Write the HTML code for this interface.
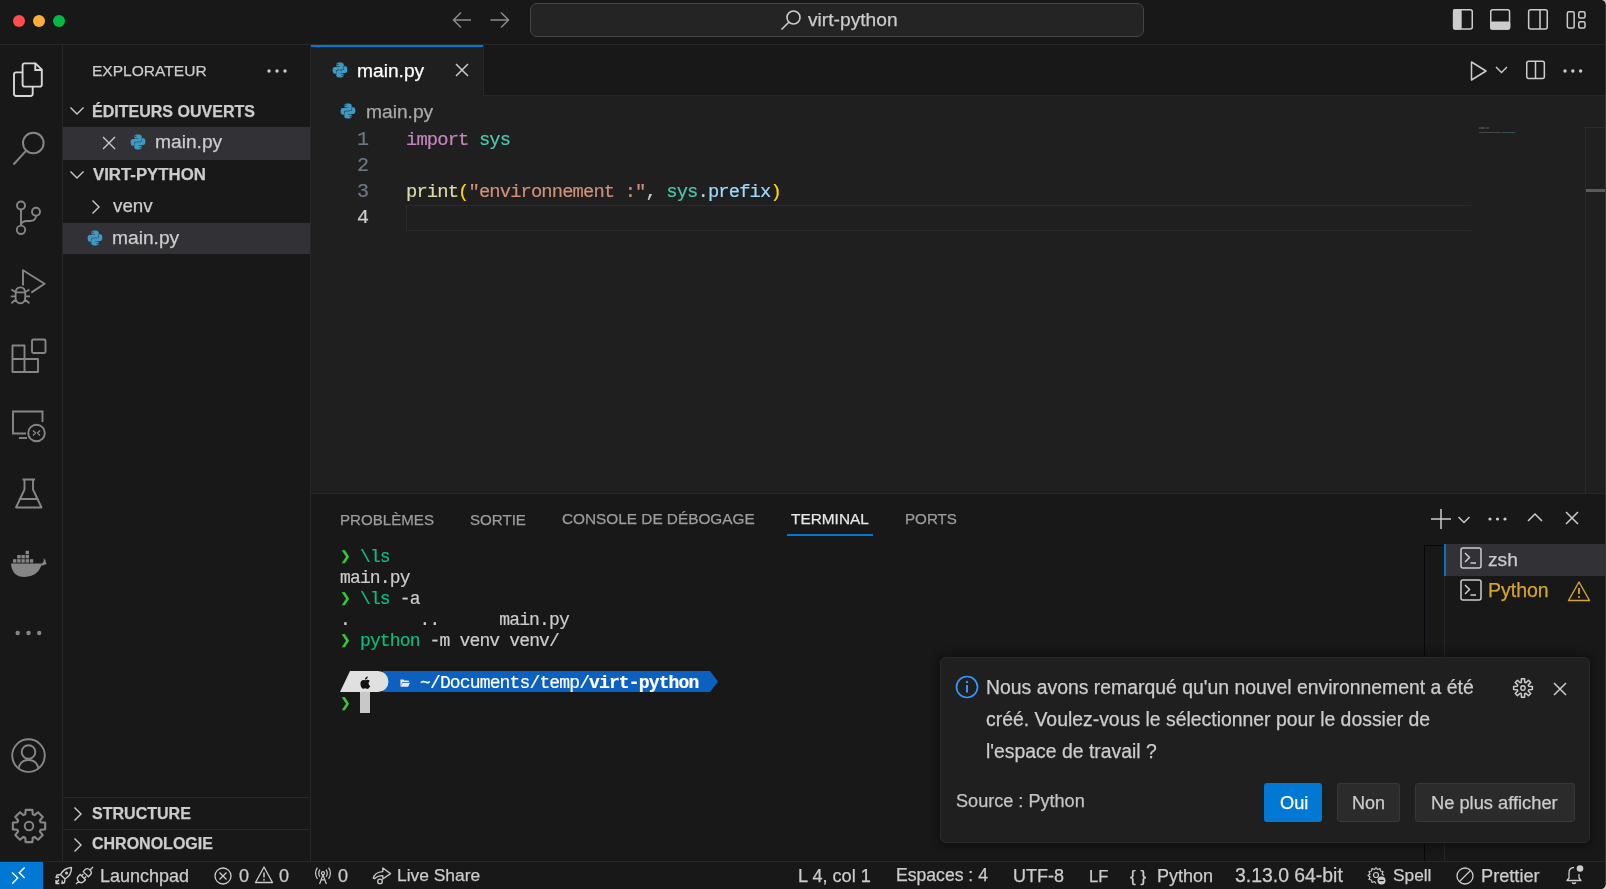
<!DOCTYPE html>
<html><head><meta charset="utf-8">
<style>
html,body{margin:0;padding:0;}
body{width:1606px;height:889px;position:relative;overflow:hidden;background:#181818;}
.r{position:absolute;box-sizing:border-box;}
svg.r{overflow:visible;}
.t{position:absolute;line-height:1;white-space:pre;will-change:transform;}
.s{font-family:"Liberation Sans",sans-serif;-webkit-text-stroke:0.25px currentColor;}
.m{font-family:"Liberation Mono",monospace;-webkit-text-stroke:0.2px currentColor;}
</style></head><body>
<div class="r" style="left:0px;top:44px;width:1606px;height:1px;background:#272727;"></div>
<div class="r" style="left:12.7px;top:14.7px;width:12.6px;height:12.6px;border-radius:50%;background:#fe4e4b"></div>
<div class="r" style="left:32.7px;top:14.7px;width:12.6px;height:12.6px;border-radius:50%;background:#fdae3a"></div>
<div class="r" style="left:52.7px;top:14.7px;width:12.6px;height:12.6px;border-radius:50%;background:#03b944"></div>
<svg class="r" style="left:452px;top:11px" width="20" height="18" viewBox="0 0 20 18"><path d="M1.5 9 H19 M9 1.5 L1.5 9 L9 16.5" fill="none" stroke="#8b8b8b" stroke-width="1.5"/></svg>
<svg class="r" style="left:490px;top:11px" width="20" height="18" viewBox="0 0 20 18"><path d="M0.5 9 H18 M11 1.5 L18.5 9 L11 16.5" fill="none" stroke="#8b8b8b" stroke-width="1.5"/></svg>
<div class="r" style="left:530px;top:3px;width:614px;height:34px;border:1px solid #464646;border-radius:7px;background:#242424"></div>
<svg class="r" style="left:780px;top:9px" width="22" height="22" viewBox="0 0 22 22"><circle cx="13.5" cy="8.5" r="6.5" fill="none" stroke="#cccccc" stroke-width="1.6"/><path d="M9 13 L1.5 20.5" stroke="#cccccc" stroke-width="1.6"/></svg>
<div class="t s" style="left:808.00px;top:9.75px;font-size:19.2px;color:#cccccc;">virt-python</div>
<svg class="r" style="left:1452px;top:9px" width="22" height="22" viewBox="0 0 22 22"><rect x="1.65" y="0.85" width="18.6" height="19.2" rx="2" fill="none" stroke="#cccccc" stroke-width="1.5"/><rect x="0.9" y="0.1" width="8.8" height="20.7" rx="2" fill="#cccccc"/></svg>
<svg class="r" style="left:1489px;top:9px" width="22" height="22" viewBox="0 0 22 22"><rect x="1.75" y="0.85" width="18.8" height="19.2" rx="2" fill="none" stroke="#cccccc" stroke-width="1.5"/><rect x="1" y="12.6" width="20.3" height="8.2" rx="2" fill="#cccccc"/></svg>
<svg class="r" style="left:1527px;top:9px" width="22" height="22" viewBox="0 0 22 22"><rect x="1.65" y="0.85" width="18.6" height="19.2" rx="2" fill="none" stroke="#cccccc" stroke-width="1.5"/><path d="M13 1 V20" stroke="#cccccc" stroke-width="1.5"/></svg>
<svg class="r" style="left:1565px;top:9px" width="22" height="22" viewBox="0 0 22 22"><rect x="2.35" y="2.65" width="6.8" height="16.25" rx="1.5" fill="none" stroke="#cccccc" stroke-width="1.5"/><rect x="13.75" y="2.75" width="6.25" height="6.25" rx="1.5" fill="none" stroke="#cccccc" stroke-width="1.5"/><rect x="13.75" y="12.75" width="6.25" height="6.25" rx="1.5" fill="none" stroke="#cccccc" stroke-width="1.5"/></svg>
<div class="r" style="left:62px;top:45px;width:1px;height:816px;background:#272727;"></div>
<svg class="r" style="left:12px;top:61px" width="32" height="38" viewBox="0 0 32 38"><path d="M10.6 11.4 H4.2 Q2 11.4 2 13.6 V32.8 Q2 35 4.2 35 H18.5 Q20.7 35 20.7 32.8 V25.6" fill="none" stroke="#d7d7d7" stroke-width="1.9"/><path d="M12.8 2.4 H23.5 L29.8 8.7 V23.4 Q29.8 25.6 27.6 25.6 H12.8 Q10.6 25.6 10.6 23.4 V4.6 Q10.6 2.4 12.8 2.4 Z M23.3 2.8 V9 H29.6" fill="none" stroke="#d7d7d7" stroke-width="1.9"/></svg>
<svg class="r" style="left:10px;top:128px" width="36" height="40" viewBox="0 0 36 40"><circle cx="23.3" cy="15" r="10.3" fill="none" stroke="#868686" stroke-width="2"/><path d="M16 22.8 L3.5 36.5" stroke="#868686" stroke-width="2"/></svg>
<svg class="r" style="left:10px;top:196px" width="36" height="40" viewBox="0 0 36 40"><circle cx="11" cy="9.5" r="4" fill="none" stroke="#868686" stroke-width="1.9"/><circle cx="11" cy="33.8" r="4.2" fill="none" stroke="#868686" stroke-width="1.9"/><circle cx="26" cy="15.8" r="4" fill="none" stroke="#868686" stroke-width="1.9"/><path d="M11 13.5 V29.6 M26 19.8 Q26 25 20 25 H17 Q11 25 11 29.6" fill="none" stroke="#868686" stroke-width="1.9"/></svg>
<svg class="r" style="left:8px;top:266px" width="40" height="40" viewBox="0 0 40 40"><path d="M15 19.6 V4.2 L36.6 17.8 L23.3 26.6" fill="none" stroke="#868686" stroke-width="1.9" stroke-linejoin="round"/><path d="M7.6 27.2 Q7.6 21.3 12.4 21.3 Q17.2 21.3 17.2 27.2 V31.6 Q17.2 37.3 12.4 37.3 Q7.6 37.3 7.6 31.6 Z M7.6 26.4 H17.2 M3.4 23.5 L7.4 26.1 M2.8 30.4 H7.6 M3.4 37.2 L7.3 34 M21.4 23.5 L17.4 26.1 M17.2 30.4 H22 M21.4 37.2 L17.5 34" fill="none" stroke="#868686" stroke-width="1.8"/></svg>
<svg class="r" style="left:9px;top:336px" width="40" height="40" viewBox="0 0 40 40"><path d="M3.5 9.5 H15.5 V23 H29 V36 H3.5 Z M3.5 23 H15.5 V36" fill="none" stroke="#868686" stroke-width="1.9" stroke-linejoin="round"/><rect x="23" y="3.5" width="13.5" height="13.5" rx="1.5" fill="none" stroke="#868686" stroke-width="1.9"/></svg>
<svg class="r" style="left:9px;top:406px" width="40" height="40" viewBox="0 0 40 40"><path d="M17 27.5 H4 V5.5 H33.5 V16" fill="none" stroke="#868686" stroke-width="1.9"/><path d="M10 32 H18" stroke="#868686" stroke-width="1.9"/><circle cx="27.5" cy="27" r="8.3" fill="none" stroke="#868686" stroke-width="1.9"/><path d="M24 24.5 L26.5 27 L24 29.5 M31 24.5 L28.5 27 L31 29.5" fill="none" stroke="#868686" stroke-width="1.4"/></svg>
<svg class="r" style="left:9px;top:475px" width="40" height="40" viewBox="0 0 40 40"><path d="M13.5 4.5 H26 M15.5 4.5 V14.5 L7 32.5 H32.5 L24 14.5 V4.5 M9.8 24 H29.5" fill="none" stroke="#868686" stroke-width="1.9" stroke-linejoin="round"/></svg>
<svg class="r" style="left:9px;top:548px" width="40" height="32" viewBox="0 0 40 32"><path d="M2 15.5 H33 Q35.5 13 34.5 10 Q37.5 12.5 36.5 14 Q38 15 37.5 16 Q34 17.5 32.5 17.5 Q28 29 15.5 29 Q3 29 2 15.5 Z" fill="#868686"/><g fill="#868686"><rect x="4" y="11.2" width="3.4" height="3.4"/><rect x="8.2" y="11.2" width="3.4" height="3.4"/><rect x="12.4" y="11.2" width="3.4" height="3.4"/><rect x="16.6" y="11.2" width="3.4" height="3.4"/><rect x="20.8" y="11.2" width="3.4" height="3.4"/><rect x="8.2" y="7" width="3.4" height="3.4"/><rect x="12.4" y="7" width="3.4" height="3.4"/><rect x="16.6" y="7" width="3.4" height="3.4"/><rect x="16.6" y="2.8" width="3.4" height="3.4"/></g></svg>
<svg class="r" style="left:12px;top:628px" width="32" height="10" viewBox="0 0 32 10"><circle cx="5.7" cy="5" r="2.2" fill="#868686"/><circle cx="16.5" cy="5" r="2.2" fill="#868686"/><circle cx="27.2" cy="5" r="2.2" fill="#868686"/></svg>
<svg class="r" style="left:9px;top:736px" width="40" height="40" viewBox="0 0 40 40"><circle cx="19.5" cy="19.6" r="16.3" fill="none" stroke="#868686" stroke-width="1.9"/><circle cx="19.5" cy="16" r="6.8" fill="none" stroke="#868686" stroke-width="1.9"/><path d="M9.5 32.5 Q11.5 24 19.5 24 Q27.5 24 29.5 32.5" fill="none" stroke="#868686" stroke-width="1.9"/></svg>
<svg class="r" style="left:8.7px;top:806px" width="40" height="40" viewBox="0 0 40 40"><path d="M31.60 16.23 L36.16 16.65 L36.16 23.35 L31.60 23.77 L30.87 25.54 L33.79 29.06 L29.06 33.79 L25.54 30.87 L23.77 31.60 L23.35 36.16 L16.65 36.16 L16.23 31.60 L14.46 30.87 L10.94 33.79 L6.21 29.06 L9.13 25.54 L8.40 23.77 L3.84 23.35 L3.84 16.65 L8.40 16.23 L9.13 14.46 L6.21 10.94 L10.94 6.21 L14.46 9.13 L16.23 8.40 L16.65 3.84 L23.35 3.84 L23.77 8.40 L25.54 9.13 L29.06 6.21 L33.79 10.94 L30.87 14.46 Z" fill="none" stroke="#868686" stroke-width="2.1" stroke-linejoin="round"/><circle cx="20" cy="20" r="4.3" fill="none" stroke="#868686" stroke-width="1.9"/></svg>
<div class="r" style="left:310px;top:45px;width:1px;height:816px;background:#272727;"></div>
<div class="t s" style="left:92.20px;top:62.84px;font-size:15.55px;color:#cccccc;">EXPLORATEUR</div>
<svg class="r" style="left:266px;top:66px" width="22" height="10" viewBox="0 0 22 10"><circle cx="3" cy="5" r="1.7" fill="#cccccc"/><circle cx="11" cy="5" r="1.7" fill="#cccccc"/><circle cx="19" cy="5" r="1.7" fill="#cccccc"/></svg>
<svg class="r" style="left:69px;top:106px" width="16" height="10" viewBox="0 0 16 10"><path d="M1.5 1.5 L8 8 L14.5 1.5" fill="none" stroke="#cccccc" stroke-width="1.4"/></svg>
<div class="t s" style="left:92.40px;top:103.21px;font-size:16.05px;color:#cccccc;font-weight:bold;">ÉDITEURS OUVERTS</div>
<div class="r" style="left:63px;top:127px;width:247px;height:33px;background:#313136;"></div>
<svg class="r" style="left:101px;top:135px" width="16" height="16" viewBox="0 0 16 16"><path d="M2 2 L14 14 M14 2 L2 14" stroke="#cccccc" stroke-width="1.4"/></svg>
<svg class="r" style="left:130px;top:134px" width="16" height="16" viewBox="0 0 16 16"><g fill="#3d9bc3"><path d="M7.6 0.6 C4.2 0.6 4.5 2.1 4.5 2.1 V4.4 H7.8 V5.1 H3 C3 5.1 0.6 4.8 0.6 8.3 C0.6 11.8 2.7 11.7 2.7 11.7 H4 V9.9 C4 9.9 3.9 7.8 6.1 7.8 H9.7 C9.7 7.8 11.7 7.8 11.7 5.8 V2.6 C11.7 2.6 12 0.6 7.6 0.6 Z M5.8 1.6 A0.65 0.65 0 1 1 5.8 2.9 A0.65 0.65 0 1 1 5.8 1.6 Z"/><path d="M8.4 15.4 C11.8 15.4 11.5 13.9 11.5 13.9 V11.6 H8.2 V10.9 H13 C13 10.9 15.4 11.2 15.4 7.7 C15.4 4.2 13.3 4.3 13.3 4.3 H12 V6.1 C12 6.1 12.1 8.2 9.9 8.2 H6.3 C6.3 8.2 4.3 8.2 4.3 10.2 V13.4 C4.3 13.4 4 15.4 8.4 15.4 Z M10.2 14.4 A0.65 0.65 0 1 1 10.2 13.1 A0.65 0.65 0 1 1 10.2 14.4 Z"/></g></svg>
<div class="t s" style="left:155.40px;top:132.05px;font-size:19.2px;color:#cccccc;">main.py</div>
<svg class="r" style="left:69px;top:170px" width="16" height="10" viewBox="0 0 16 10"><path d="M1.5 1.5 L8 8 L14.5 1.5" fill="none" stroke="#cccccc" stroke-width="1.4"/></svg>
<div class="t s" style="left:92.90px;top:166.98px;font-size:16.8px;color:#cccccc;font-weight:bold;">VIRT-PYTHON</div>
<svg class="r" style="left:91px;top:199px" width="10" height="16" viewBox="0 0 10 16"><path d="M1.5 1.5 L8 8 L1.5 14.5" fill="none" stroke="#cccccc" stroke-width="1.4"/></svg>
<div class="t s" style="left:112.60px;top:196.79px;font-size:18.8px;color:#cccccc;">venv</div>
<div class="r" style="left:63px;top:223px;width:247px;height:31px;background:#313136;"></div>
<svg class="r" style="left:86.5px;top:230px" width="16" height="16" viewBox="0 0 16 16"><g fill="#3d9bc3"><path d="M7.6 0.6 C4.2 0.6 4.5 2.1 4.5 2.1 V4.4 H7.8 V5.1 H3 C3 5.1 0.6 4.8 0.6 8.3 C0.6 11.8 2.7 11.7 2.7 11.7 H4 V9.9 C4 9.9 3.9 7.8 6.1 7.8 H9.7 C9.7 7.8 11.7 7.8 11.7 5.8 V2.6 C11.7 2.6 12 0.6 7.6 0.6 Z M5.8 1.6 A0.65 0.65 0 1 1 5.8 2.9 A0.65 0.65 0 1 1 5.8 1.6 Z"/><path d="M8.4 15.4 C11.8 15.4 11.5 13.9 11.5 13.9 V11.6 H8.2 V10.9 H13 C13 10.9 15.4 11.2 15.4 7.7 C15.4 4.2 13.3 4.3 13.3 4.3 H12 V6.1 C12 6.1 12.1 8.2 9.9 8.2 H6.3 C6.3 8.2 4.3 8.2 4.3 10.2 V13.4 C4.3 13.4 4 15.4 8.4 15.4 Z M10.2 14.4 A0.65 0.65 0 1 1 10.2 13.1 A0.65 0.65 0 1 1 10.2 14.4 Z"/></g></svg>
<div class="t s" style="left:112.30px;top:227.95px;font-size:19.2px;color:#cccccc;">main.py</div>
<div class="r" style="left:63px;top:797px;width:246px;height:1px;background:#272727;"></div>
<svg class="r" style="left:73px;top:806px" width="10" height="16" viewBox="0 0 10 16"><path d="M1.5 1.5 L8 8 L1.5 14.5" fill="none" stroke="#cccccc" stroke-width="1.4"/></svg>
<div class="t s" style="left:92.40px;top:805.41px;font-size:16.05px;color:#cccccc;font-weight:bold;">STRUCTURE</div>
<div class="r" style="left:63px;top:829px;width:246px;height:1px;background:#272727;"></div>
<svg class="r" style="left:73px;top:837px" width="10" height="16" viewBox="0 0 10 16"><path d="M1.5 1.5 L8 8 L1.5 14.5" fill="none" stroke="#cccccc" stroke-width="1.4"/></svg>
<div class="t s" style="left:92.40px;top:836.46px;font-size:16.0px;color:#cccccc;font-weight:bold;">CHRONOLOGIE</div>
<div class="r" style="left:311px;top:96px;width:1295px;height:397px;background:#1f1f1f;"></div>
<div class="r" style="left:311px;top:95px;width:1295px;height:1px;background:#272727;"></div>
<div class="r" style="left:311px;top:45px;width:172px;height:51px;background:#1f1f1f;"></div>
<div class="r" style="left:311px;top:45px;width:172px;height:2px;background:#0078d4;"></div>
<div class="r" style="left:483px;top:45px;width:1px;height:51px;background:#272727;"></div>
<svg class="r" style="left:332px;top:62px" width="16" height="16" viewBox="0 0 16 16"><g fill="#3d9bc3"><path d="M7.6 0.6 C4.2 0.6 4.5 2.1 4.5 2.1 V4.4 H7.8 V5.1 H3 C3 5.1 0.6 4.8 0.6 8.3 C0.6 11.8 2.7 11.7 2.7 11.7 H4 V9.9 C4 9.9 3.9 7.8 6.1 7.8 H9.7 C9.7 7.8 11.7 7.8 11.7 5.8 V2.6 C11.7 2.6 12 0.6 7.6 0.6 Z M5.8 1.6 A0.65 0.65 0 1 1 5.8 2.9 A0.65 0.65 0 1 1 5.8 1.6 Z"/><path d="M8.4 15.4 C11.8 15.4 11.5 13.9 11.5 13.9 V11.6 H8.2 V10.9 H13 C13 10.9 15.4 11.2 15.4 7.7 C15.4 4.2 13.3 4.3 13.3 4.3 H12 V6.1 C12 6.1 12.1 8.2 9.9 8.2 H6.3 C6.3 8.2 4.3 8.2 4.3 10.2 V13.4 C4.3 13.4 4 15.4 8.4 15.4 Z M10.2 14.4 A0.65 0.65 0 1 1 10.2 13.1 A0.65 0.65 0 1 1 10.2 14.4 Z"/></g></svg>
<div class="t s" style="left:357.00px;top:60.85px;font-size:19.2px;color:#ffffff;">main.py</div>
<svg class="r" style="left:454px;top:62px" width="16" height="16" viewBox="0 0 16 16"><path d="M2 2 L14 14 M14 2 L2 14" stroke="#cccccc" stroke-width="1.5"/></svg>
<svg class="r" style="left:1469px;top:60px" width="20" height="22" viewBox="0 0 20 22"><path d="M2.5 2 L17 11 L2.5 20 Z" fill="none" stroke="#cccccc" stroke-width="1.5" stroke-linejoin="round"/></svg>
<svg class="r" style="left:1494px;top:65px" width="16" height="10" viewBox="0 0 16 10"><path d="M2 2 L7.5 7.5 L13 2" fill="none" stroke="#cccccc" stroke-width="1.4"/></svg>
<svg class="r" style="left:1525px;top:59px" width="21" height="21" viewBox="0 0 21 21"><rect x="1.75" y="2.2" width="17.6" height="17.2" rx="2" fill="none" stroke="#cccccc" stroke-width="1.5"/><path d="M10.5 2.2 V19.4" stroke="#cccccc" stroke-width="1.5"/></svg>
<svg class="r" style="left:1562px;top:66px" width="22" height="10" viewBox="0 0 22 10"><circle cx="3" cy="5" r="1.7" fill="#cccccc"/><circle cx="10.8" cy="5" r="1.7" fill="#cccccc"/><circle cx="18.6" cy="5" r="1.7" fill="#cccccc"/></svg>
<svg class="r" style="left:340px;top:103px" width="16" height="16" viewBox="0 0 16 16"><g fill="#3d9bc3"><path d="M7.6 0.6 C4.2 0.6 4.5 2.1 4.5 2.1 V4.4 H7.8 V5.1 H3 C3 5.1 0.6 4.8 0.6 8.3 C0.6 11.8 2.7 11.7 2.7 11.7 H4 V9.9 C4 9.9 3.9 7.8 6.1 7.8 H9.7 C9.7 7.8 11.7 7.8 11.7 5.8 V2.6 C11.7 2.6 12 0.6 7.6 0.6 Z M5.8 1.6 A0.65 0.65 0 1 1 5.8 2.9 A0.65 0.65 0 1 1 5.8 1.6 Z"/><path d="M8.4 15.4 C11.8 15.4 11.5 13.9 11.5 13.9 V11.6 H8.2 V10.9 H13 C13 10.9 15.4 11.2 15.4 7.7 C15.4 4.2 13.3 4.3 13.3 4.3 H12 V6.1 C12 6.1 12.1 8.2 9.9 8.2 H6.3 C6.3 8.2 4.3 8.2 4.3 10.2 V13.4 C4.3 13.4 4 15.4 8.4 15.4 Z M10.2 14.4 A0.65 0.65 0 1 1 10.2 13.1 A0.65 0.65 0 1 1 10.2 14.4 Z"/></g></svg>
<div class="t s" style="left:366.20px;top:101.55px;font-size:19.2px;color:#a9a9a9;">main.py</div>
<div class="t m" style="left:357.40px;top:130.48px;font-size:20.0px;color:#6e7681;">1</div>
<div class="t m" style="left:357.40px;top:156.48px;font-size:20.0px;color:#6e7681;">2</div>
<div class="t m" style="left:357.40px;top:182.48px;font-size:20.0px;color:#6e7681;">3</div>
<div class="t m" style="left:357.40px;top:208.08px;font-size:20.0px;color:#cccccc;">4</div>
<div class="r" style="left:406px;top:205px;width:1065px;height:26px;border:1px solid #2a2a2a;border-right:none"></div>
<div class="t m" style="left:406.23px;top:130.60px;font-size:18.8px;color:#cccccc;letter-spacing:-0.8599999999999994px;"><span style="color:#c586c0">import</span><span style="color:#ccc"> </span><span style="color:#4ec9b0">sys</span></div>
<div class="t m" style="left:406.23px;top:182.60px;font-size:18.8px;color:#cccccc;letter-spacing:-0.8599999999999994px;"><span style="color:#dcdcaa">print</span><span style="color:#ffd700">(</span><span style="color:#ce9178">"environnement :"</span><span style="color:#cccccc">, </span><span style="color:#4ec9b0">sys</span><span style="color:#cccccc">.</span><span style="color:#9cdcfe">prefix</span><span style="color:#ffd700">)</span></div>
<div class="r" style="left:1479px;top:127px;width:6px;height:1.5px;background:#4a3a4a;"></div>
<div class="r" style="left:1486px;top:127px;width:3px;height:1.5px;background:#2a4a45;"></div>
<div class="r" style="left:1479px;top:131.5px;width:22px;height:1.5px;background:#4a4640;"></div>
<div class="r" style="left:1502px;top:131.5px;width:13px;height:1.5px;background:#34505a;"></div>
<div class="r" style="left:1585px;top:127px;width:1px;height:366px;background:#2b2b2b;"></div>
<div class="r" style="left:1585px;top:127px;width:21px;height:1px;background:#2b2b2b;"></div>
<div class="r" style="left:1586px;top:189px;width:20px;height:3px;background:#5a5a5a;"></div>
<div class="r" style="left:311px;top:493px;width:1295px;height:1px;background:#272727;"></div>
<div class="t s" style="left:340.20px;top:511.52px;font-size:15.1px;color:#9d9d9d;">PROBLÈMES</div>
<div class="t s" style="left:470.00px;top:511.52px;font-size:15.1px;color:#9d9d9d;">SORTIE</div>
<div class="t s" style="left:562.00px;top:511.31px;font-size:15.35px;color:#9d9d9d;">CONSOLE DE DÉBOGAGE</div>
<div class="t s" style="left:790.70px;top:511.26px;font-size:15.4px;color:#e7e7e7;">TERMINAL</div>
<div class="r" style="left:787px;top:534px;width:86px;height:2px;background:#0078d4;"></div>
<div class="t s" style="left:905.00px;top:511.48px;font-size:15.15px;color:#9d9d9d;">PORTS</div>
<svg class="r" style="left:1430px;top:508px" width="22" height="22" viewBox="0 0 22 22"><path d="M11 1 V21 M1 11 H21" stroke="#cccccc" stroke-width="1.5"/></svg>
<svg class="r" style="left:1457px;top:515px" width="14" height="10" viewBox="0 0 14 10"><path d="M1.5 2 L7 7.5 L12.5 2" fill="none" stroke="#cccccc" stroke-width="1.4"/></svg>
<svg class="r" style="left:1487px;top:514px" width="22" height="10" viewBox="0 0 22 10"><circle cx="3" cy="5" r="1.6" fill="#cccccc"/><circle cx="10.5" cy="5" r="1.6" fill="#cccccc"/><circle cx="18" cy="5" r="1.6" fill="#cccccc"/></svg>
<svg class="r" style="left:1526px;top:511px" width="18" height="14" viewBox="0 0 18 14"><path d="M2 10 L9 3 L16 10" fill="none" stroke="#cccccc" stroke-width="1.5"/></svg>
<svg class="r" style="left:1564px;top:510px" width="16" height="16" viewBox="0 0 16 16"><path d="M2 2 L14 14 M14 2 L2 14" stroke="#cccccc" stroke-width="1.5"/></svg>
<div class="r" style="left:1424px;top:545px;width:1px;height:316px;background:#05080c;"></div>
<div class="r" style="left:1424px;top:545px;width:20px;height:1px;background:#05080c;"></div>
<div class="r" style="left:1444px;top:545px;width:1px;height:316px;background:#272727;"></div>
<div class="r" style="left:1445px;top:544px;width:161px;height:32px;background:#313136;"></div>
<div class="r" style="left:1444px;top:544px;width:1.5px;height:32px;background:#0073cc;"></div>
<svg class="r" style="left:1460px;top:547px" width="22" height="22" viewBox="0 0 22 22"><rect x="1" y="1" width="20" height="20" rx="2" fill="none" stroke="#cccccc" stroke-width="1.5"/><path d="M5 6 L9.5 10.5 L5 15 M10.5 16 H16" fill="none" stroke="#cccccc" stroke-width="1.5"/></svg>
<div class="t s" style="left:1487.80px;top:549.75px;font-size:19.2px;color:#cccccc;">zsh</div>
<svg class="r" style="left:1460px;top:579px" width="22" height="22" viewBox="0 0 22 22"><rect x="1" y="1" width="20" height="20" rx="2" fill="none" stroke="#cccccc" stroke-width="1.5"/><path d="M5 6 L9.5 10.5 L5 15 M10.5 16 H16" fill="none" stroke="#cccccc" stroke-width="1.5"/></svg>
<div class="t s" style="left:1488.00px;top:581.49px;font-size:19.5px;color:#d5a531;">Python</div>
<svg class="r" style="left:1567px;top:580px" width="24" height="22" viewBox="0 0 24 22"><path d="M12 2 L22.5 20.5 H1.5 Z" fill="none" stroke="#d5a531" stroke-width="1.4" stroke-linejoin="round"/><path d="M12 8 V14" stroke="#d5a531" stroke-width="1.8"/><circle cx="12" cy="17" r="1.1" fill="#d5a531"/></svg>
<div class="t m" style="left:340.43px;top:548.01px;font-size:18.0px;color:#cccccc;letter-spacing:-0.8499999999999996px;white-space:pre;"><span style="color:#37c837">❯ </span><span style="color:#0dbc79">\ls</span></div>
<div class="t m" style="left:340.43px;top:569.01px;font-size:18.0px;color:#cccccc;letter-spacing:-0.8499999999999996px;white-space:pre;"><span style="color:#cccccc">main.py</span></div>
<div class="t m" style="left:340.43px;top:590.01px;font-size:18.0px;color:#cccccc;letter-spacing:-0.8499999999999996px;white-space:pre;"><span style="color:#37c837">❯ </span><span style="color:#0dbc79">\ls</span><span style="color:#cccccc"> -a</span></div>
<div class="t m" style="left:340.43px;top:611.01px;font-size:18.0px;color:#cccccc;letter-spacing:-0.8499999999999996px;white-space:pre;"><span style="color:#cccccc">.       ..      main.py</span></div>
<div class="t m" style="left:340.43px;top:632.01px;font-size:18.0px;color:#cccccc;letter-spacing:-0.8499999999999996px;white-space:pre;"><span style="color:#37c837">❯ </span><span style="color:#0dbc79">python</span><span style="color:#cccccc"> -m venv venv/</span></div>
<svg class="r" style="left:339px;top:670px" width="382" height="23" viewBox="0 0 382 23"><path d="M44 1 H371 L379 11.5 L371 22 H44 Z" fill="#0c60c0"/><path d="M1 22 L11 1 H39 A10.5 10.5 0 0 1 39 22 Z" fill="#e0e0e0"/></svg>
<svg class="r" style="left:359.5px;top:675.5px" width="14" height="16" viewBox="0 0 14 16"><path d="M9.5 0.5 Q9.6 2.3 8.4 3.5 Q7.3 4.6 6 4.4 Q5.9 2.8 7 1.7 Q8.1 0.6 9.5 0.5 Z M6.9 5.1 Q8 4.6 9 4.6 Q11 4.7 12 6.2 Q10.3 7.3 10.4 9.2 Q10.5 11.3 12.5 12.1 Q11.8 14 10.7 15 Q9.9 15.8 8.9 15.7 Q8.2 15.6 7.2 15.2 Q6.2 14.9 5.2 15.3 Q4.3 15.7 3.8 15.7 Q2.9 15.6 2 14.4 Q0.5 12.3 0.5 9.6 Q0.5 7.2 1.9 5.9 Q3 4.8 4.4 4.8 Q5.3 4.8 6.9 5.1 Z" fill="#111" transform="scale(0.82)"/></svg>
<svg class="r" style="left:400px;top:677.5px" width="13" height="12" viewBox="0 0 13 12"><path d="M0.5 2 H4.5 L5.5 3.2 H11 V5 H3 L0.5 11 Z M3.2 5.8 H12.5 L10.2 11 H0.8 Z" fill="#e8e8e8" transform="scale(0.8)"/></svg>
<div class="t m" style="left:420.03px;top:674.01px;font-size:18.0px;color:#ffffff;letter-spacing:-0.8499999999999996px;">~/Documents/temp/</div>
<div class="t m" style="left:589.17px;top:674.01px;font-size:18.0px;color:#ffffff;font-weight:bold;letter-spacing:-0.8499999999999996px;">virt-python</div>
<div class="t m" style="left:340.43px;top:695.01px;font-size:18.0px;color:#cccccc;letter-spacing:-0.8499999999999996px;white-space:pre;"><span style="color:#37c837">❯</span></div>
<div class="r" style="left:360px;top:692px;width:10px;height:21px;background:#c8c8c8;"></div>
<div class="r" style="left:940px;top:657px;width:650px;height:186px;background:#1f1f1f;border:1px solid #2b2b2b;border-radius:6px;box-shadow:0 0 8px 2px rgba(0,0,0,0.45)"></div>
<svg class="r" style="left:955px;top:675px" width="24" height="24" viewBox="0 0 24 24"><circle cx="12" cy="12" r="10.5" fill="none" stroke="#3794ff" stroke-width="1.7"/><circle cx="12" cy="7" r="1.2" fill="#3794ff"/><path d="M12 10 V17.5" stroke="#3794ff" stroke-width="2"/></svg>
<div class="t s" style="left:986.00px;top:677.58px;font-size:19.4px;color:#cccccc;">Nous avons remarqué qu'un nouvel environnement a été</div>
<div class="t s" style="left:986.00px;top:710.08px;font-size:19.4px;color:#cccccc;">créé. Voulez-vous le sélectionner pour le dossier de</div>
<div class="t s" style="left:986.00px;top:741.88px;font-size:19.4px;color:#cccccc;">l'espace de travail ?</div>
<svg class="r" style="left:1511.7px;top:677.4px" width="22" height="22" viewBox="0 0 22 22"><path d="M16.76 9.33 L20.37 9.44 L20.37 12.56 L16.76 12.67 L16.26 13.89 L18.73 16.52 L16.52 18.73 L13.89 16.26 L12.67 16.76 L12.56 20.37 L9.44 20.37 L9.33 16.76 L8.11 16.26 L5.48 18.73 L3.27 16.52 L5.74 13.89 L5.24 12.67 L1.63 12.56 L1.63 9.44 L5.24 9.33 L5.74 8.11 L3.27 5.48 L5.48 3.27 L8.11 5.74 L9.33 5.24 L9.44 1.63 L12.56 1.63 L12.67 5.24 L13.89 5.74 L16.52 3.27 L18.73 5.48 L16.26 8.11 Z" fill="none" stroke="#cccccc" stroke-width="1.5" stroke-linejoin="round"/><circle cx="11" cy="11" r="2.2" fill="none" stroke="#cccccc" stroke-width="1.4"/></svg>
<svg class="r" style="left:1552px;top:681px" width="16" height="16" viewBox="0 0 16 16"><path d="M2 2 L14 14 M14 2 L2 14" stroke="#cccccc" stroke-width="1.5"/></svg>
<div class="t s" style="left:956.00px;top:792.48px;font-size:18.1px;color:#c4c4c4;">Source : Python</div>
<div class="r" style="left:1264px;top:783px;width:58px;height:39px;background:#0078d4;border-radius:3px"></div>
<div class="t s" style="left:1279.60px;top:794.19px;font-size:18.2px;color:#ffffff;">Oui</div>
<div class="r" style="left:1337px;top:783px;width:63px;height:39px;background:#2b2b2b;border:1px solid #383838;border-radius:3px"></div>
<div class="t s" style="left:1352.00px;top:793.76px;font-size:18px;color:#cccccc;">Non</div>
<div class="r" style="left:1415px;top:783px;width:160px;height:39px;background:#2b2b2b;border:1px solid #383838;border-radius:3px"></div>
<div class="t s" style="left:1430.80px;top:793.51px;font-size:18.3px;color:#cccccc;">Ne plus afficher</div>
<div class="r" style="left:0px;top:861px;width:1606px;height:1px;background:#272727;"></div>
<div class="r" style="left:0px;top:862px;width:43px;height:27px;background:#0078d4;"></div>
<svg class="r" style="left:0px;top:860px" width="43" height="29" viewBox="0 0 43 29"><path d="M12.1 12.5 L17.7 18.1 L12.1 23.7 M24.6 7.5 L19.3 12.8 L24.6 18.1" fill="none" stroke="#ffffff" stroke-width="1.4"/></svg>
<svg class="r" style="left:54px;top:866px" width="20" height="20" viewBox="0 0 20 20"><path d="M17.5 1.5 Q10 2 6.5 8.5 L11 13 Q17.5 9.5 17.5 1.5 Z M6.5 8.5 L3 9 L2 11.5 L5 11.3 M11 13 L10.5 16.5 L8 17.5 L8.3 14.5 M5 13.5 L2 17.5 M2 14 V17.5 H5.5" fill="none" stroke="#cccccc" stroke-width="1.4" stroke-linejoin="round"/><circle cx="12.5" cy="7" r="1.5" fill="#cccccc"/></svg>
<svg class="r" style="left:73.3px;top:863.8px" width="23" height="23" viewBox="0 0 20 20"><g transform="rotate(-45 10 10)" fill="none" stroke="#cccccc" stroke-width="1.15" stroke-linejoin="round"><path d="M8 6.8 H5.8 Q2.8 6.8 2.8 10 Q2.8 13.2 5.8 13.2 H8 Z M8 8.4 H10.4 M8 11.6 H10.4 M11.6 6.8 H13.8 Q16.8 6.8 16.8 10 Q16.8 13.2 13.8 13.2 H11.6 Z M-0.5 10 H2.8 M16.8 10 H20.5"/></g></svg>
<div class="t s" style="left:100.00px;top:866.76px;font-size:18.0px;color:#cccccc;">Launchpad</div>
<svg class="r" style="left:213px;top:866px" width="20" height="20" viewBox="0 0 20 20"><circle cx="10" cy="10" r="8" fill="none" stroke="#cccccc" stroke-width="1.3"/><path d="M6.5 6.5 L13.5 13.5 M13.5 6.5 L6.5 13.5" stroke="#cccccc" stroke-width="1.3"/></svg>
<div class="t s" style="left:239.00px;top:866.76px;font-size:18px;color:#cccccc;">0</div>
<svg class="r" style="left:254px;top:865px" width="20" height="20" viewBox="0 0 20 20"><path d="M10 2 L18.5 17.5 H1.5 Z" fill="none" stroke="#cccccc" stroke-width="1.3" stroke-linejoin="round"/><path d="M10 7.5 V12.5" stroke="#cccccc" stroke-width="1.5"/><circle cx="10" cy="14.8" r="0.9" fill="#cccccc"/></svg>
<div class="t s" style="left:279.00px;top:866.76px;font-size:18px;color:#cccccc;">0</div>
<svg class="r" style="left:314px;top:866px" width="20" height="20" viewBox="0 0 20 20"><circle cx="9" cy="7.2" r="1.5" fill="none" stroke="#cccccc" stroke-width="1.2"/><path d="M9 8.7 L5.6 18 M9 8.7 L12.4 18 M7 13.8 H11 M5.9 3.6 Q3.6 7.2 5.9 10.8 M12.1 3.6 Q14.4 7.2 12.1 10.8 M3.4 1.6 Q-0.3 7.2 3.4 12.8 M14.6 1.6 Q18.3 7.2 14.6 12.8" fill="none" stroke="#cccccc" stroke-width="1.2"/></svg>
<div class="t s" style="left:338.00px;top:866.76px;font-size:18px;color:#cccccc;">0</div>
<svg class="r" style="left:371px;top:866px" width="22" height="20" viewBox="0 0 22 20"><path d="M2.2 12.8 Q3.5 6 11.8 5.6 V2 L19.5 7.6 L11.8 13 V9.6 Q6 9.6 3.2 13.2" fill="none" stroke="#cccccc" stroke-width="1.3" stroke-linejoin="round"/><circle cx="9" cy="15.4" r="2.3" fill="none" stroke="#cccccc" stroke-width="1.3"/></svg>
<div class="t s" style="left:397.00px;top:867.27px;font-size:17.4px;color:#cccccc;">Live Share</div>
<div class="t s" style="left:797.80px;top:866.68px;font-size:18.1px;color:#cccccc;">L 4, col 1</div>
<div class="t s" style="left:896.40px;top:867.10px;font-size:17.6px;color:#cccccc;">Espaces : 4</div>
<div class="t s" style="left:1012.70px;top:866.76px;font-size:18px;color:#cccccc;">UTF-8</div>
<div class="t s" style="left:1088.60px;top:868.03px;font-size:16.5px;color:#cccccc;">LF</div>
<div class="t s" style="left:1130.00px;top:867.61px;font-size:17px;color:#cccccc;">{ }</div>
<div class="t s" style="left:1157.00px;top:866.76px;font-size:18px;color:#cccccc;">Python</div>
<div class="t s" style="left:1235.00px;top:865.58px;font-size:19.4px;color:#cccccc;">3.13.0 64-bit</div>
<svg class="r" style="left:1367px;top:866px" width="20" height="20" viewBox="0 0 20 20"><circle cx="9" cy="9" r="2.5" fill="none" stroke="#cccccc" stroke-width="1.2"/><path d="M9 1.5 L10.5 3.5 L13 2.5 L13.5 5 L16 5.5 L15 8 L17 9.5 M9 1.5 L7.5 3.5 L5 2.5 L4.5 5 L2 5.5 L3 8 L1 9.5 L3 11 L2 13.5 L4.5 14 L5 16.5 L7.5 15.5 L9 17.5" fill="none" stroke="#cccccc" stroke-width="1.2" stroke-linejoin="round"/><circle cx="14.5" cy="14.5" r="4" fill="#cccccc"/><path d="M12.3 14.5 H16.7" stroke="#181818" stroke-width="1.3"/></svg>
<div class="t s" style="left:1392.80px;top:867.36px;font-size:17.3px;color:#cccccc;">Spell</div>
<svg class="r" style="left:1455px;top:866px" width="20" height="20" viewBox="0 0 20 20"><circle cx="10" cy="10" r="8" fill="none" stroke="#cccccc" stroke-width="1.3"/><path d="M4.5 15.5 L15.5 4.5" stroke="#cccccc" stroke-width="1.3"/></svg>
<div class="t s" style="left:1480.80px;top:866.59px;font-size:18.2px;color:#cccccc;">Prettier</div>
<svg class="r" style="left:1564px;top:864px" width="22" height="22" viewBox="0 0 22 22"><path d="M10 3.5 Q5 3.5 5 9 V14 L3 16.5 H17 L15 14 V10 M8 18.5 Q10 20.5 12 18.5" fill="none" stroke="#cccccc" stroke-width="1.3" stroke-linejoin="round"/><circle cx="16" cy="4.5" r="3.3" fill="#cccccc"/></svg>
<div class="r" style="left:1605px;top:0px;width:1px;height:889px;background:#383838;"></div>
<svg class="r" style="left:1596px;top:0px" width="10" height="10" viewBox="0 0 10 10"><path d="M6 0 H10 V5 Q9.5 1 6 0 Z" fill="#c8c0b8"/></svg>
<svg class="r" style="left:1596px;top:879px" width="10" height="10" viewBox="0 0 10 10"><path d="M10 4.5 V10 H6 Q9.6 8.8 10 4.5 Z" fill="#d0d0d0"/></svg>
</body></html>
